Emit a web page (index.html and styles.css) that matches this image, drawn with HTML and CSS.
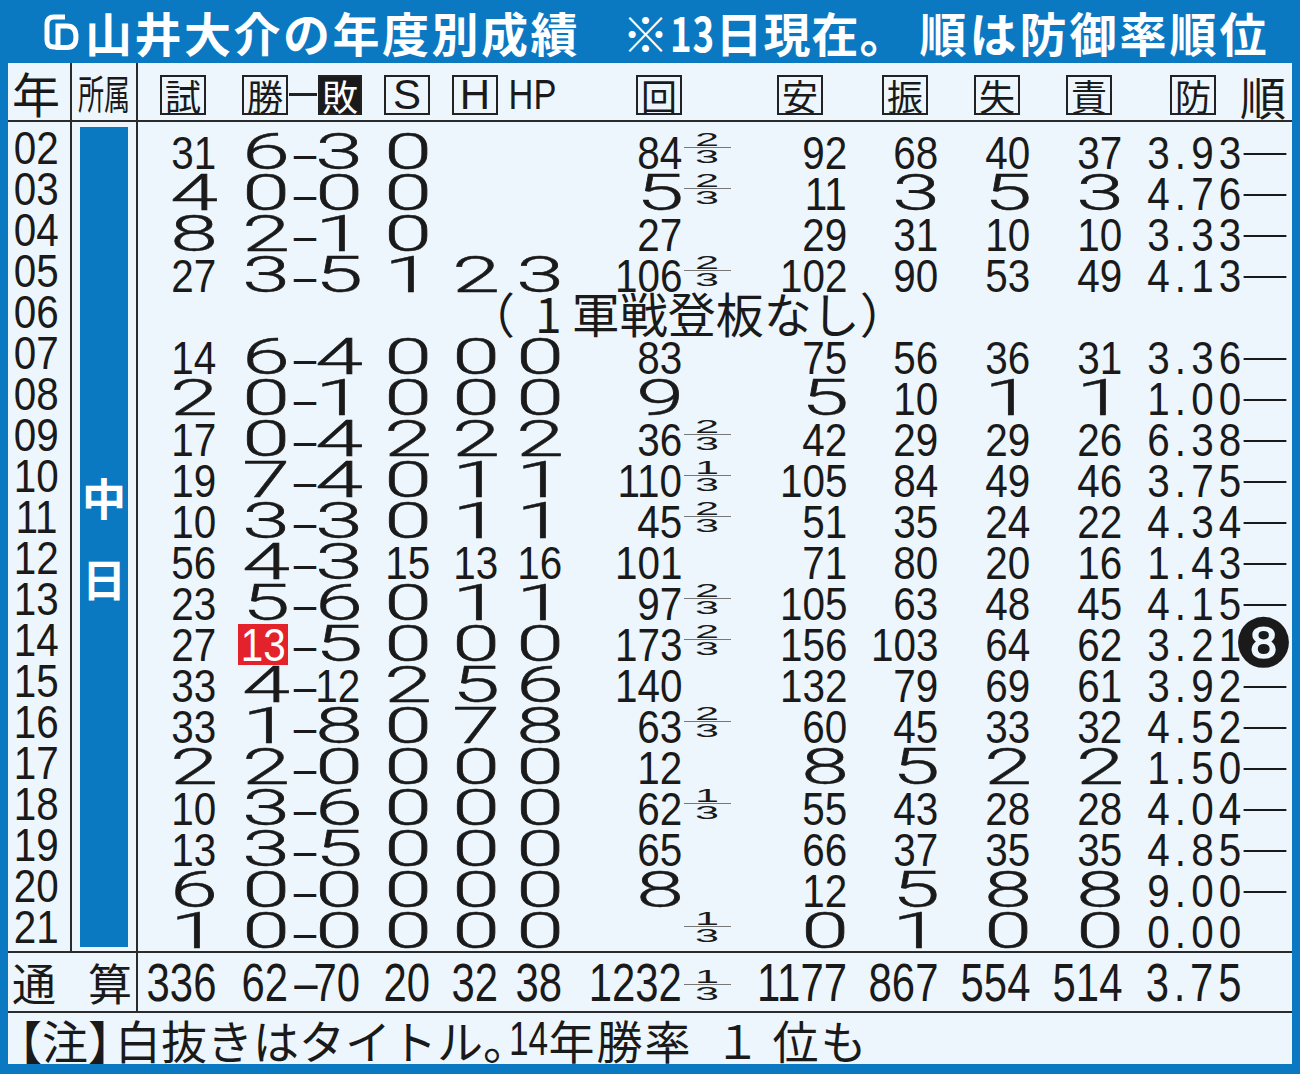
FILE: index.html
```html
<!DOCTYPE html>
<html lang="ja">
<head>
<meta charset="utf-8">
<title>山井大介の年度別成績</title>
<link rel="stylesheet" href="styles.css">
</head>
<body>
<div class="page">
  <div class="title">
    <svg class="logo" viewBox="0 0 38 42"><path d="M23 6H12Q5 6 5 13V29Q5 36 12 36H14" fill="none" stroke="#fff" stroke-width="5"/><path d="M16 13V38M13.5 15H25Q34 15 34 26Q34 36.5 25 36.5H13.5" fill="none" stroke="#fff" stroke-width="5"/></svg>
    <span class="t-name">山井大介の年度別成績</span>
    <span class="t-date">※<span class="d13">13</span>日現在。</span>
    <span class="t-rank">順は防御率順位</span>
  </div>
  <div class="panel">
    <div class="head">
      <div class="c-year">年</div>
      <div class="c-team"><span class="shozoku">所属</span></div>
      <div class="cols">
        <div class="mr10"><span class="box">試</span></div>
        <div><span class="box">勝</span></div>
        <div><span class="hdash"></span></div>
        <div class="mr-2"><span class="box inv">敗</span></div>
        <div><span class="box lat">S</span></div>
        <div><span class="box lat">H</span></div>
        <div class="mr6"><span class="hp">HP</span></div>
        <div><span class="box">回</span></div>
        <div></div>
        <div class="mr24"><span class="box">安</span></div>
        <div class="mr10"><span class="box">振</span></div>
        <div class="mr10"><span class="box">失</span></div>
        <div class="mr10"><span class="box">責</span></div>
        <div class="mr24"><span class="box">防</span></div>
        <div><span class="jun">順</span></div>
      </div>
    </div>
    <div class="body">
      <div class="c-year">
        <div class="yr"><span class="n">02</span></div>
        <div class="yr"><span class="n">03</span></div>
        <div class="yr"><span class="n">04</span></div>
        <div class="yr"><span class="n">05</span></div>
        <div class="yr"><span class="n">06</span></div>
        <div class="yr"><span class="n">07</span></div>
        <div class="yr"><span class="n">08</span></div>
        <div class="yr"><span class="n">09</span></div>
        <div class="yr"><span class="n">10</span></div>
        <div class="yr"><span class="n">11</span></div>
        <div class="yr"><span class="n">12</span></div>
        <div class="yr"><span class="n">13</span></div>
        <div class="yr"><span class="n">14</span></div>
        <div class="yr"><span class="n">15</span></div>
        <div class="yr"><span class="n">16</span></div>
        <div class="yr"><span class="n">17</span></div>
        <div class="yr"><span class="n">18</span></div>
        <div class="yr"><span class="n">19</span></div>
        <div class="yr"><span class="n">20</span></div>
        <div class="yr"><span class="n">21</span></div>
      </div>
      <div class="c-team">
        <div class="team-bar"><span>中</span><span>日</span></div>
      </div>
      <div class="rows">
        <div class="row cols"><div><span class="n">31</span></div><div><span class="w">6</span></div><div><span class="n">–</span></div><div><span class="w">3</span></div><div><span class="w">0</span></div><div></div><div></div><div><span class="n">84</span></div><div><span class="f"><span>2</span><span class="fl"></span><span>3</span></span></div><div><span class="n">92</span></div><div><span class="n">68</span></div><div><span class="n">40</span></div><div><span class="n">37</span></div><div><span class="n era">3.93</span></div><div><span class="rk">―</span></div></div>
        <div class="row cols"><div><span class="w">4</span></div><div><span class="w">0</span></div><div><span class="n">–</span></div><div><span class="w">0</span></div><div><span class="w">0</span></div><div></div><div></div><div><span class="w">5</span></div><div><span class="f"><span>2</span><span class="fl"></span><span>3</span></span></div><div><span class="n">11</span></div><div><span class="w">3</span></div><div><span class="w">5</span></div><div><span class="w">3</span></div><div><span class="n era">4.76</span></div><div><span class="rk">―</span></div></div>
        <div class="row cols"><div><span class="w">8</span></div><div><span class="w">2</span></div><div><span class="n">–</span></div><div><span class="w">1</span></div><div><span class="w">0</span></div><div></div><div></div><div><span class="n">27</span></div><div></div><div><span class="n">29</span></div><div><span class="n">31</span></div><div><span class="n">10</span></div><div><span class="n">10</span></div><div><span class="n era">3.33</span></div><div><span class="rk">―</span></div></div>
        <div class="row cols"><div><span class="n">27</span></div><div><span class="w">3</span></div><div><span class="n">–</span></div><div><span class="w">5</span></div><div><span class="w">1</span></div><div><span class="w">2</span></div><div><span class="w">3</span></div><div><span class="n">106</span></div><div><span class="f"><span>2</span><span class="fl"></span><span>3</span></span></div><div><span class="n">102</span></div><div><span class="n">90</span></div><div><span class="n">53</span></div><div><span class="n">49</span></div><div><span class="n era">4.13</span></div><div><span class="rk">―</span></div></div>
        <div class="row cols"><div class="nogame"><span class="par">（</span><span class="one">1</span>軍戦登板なし）</div></div>
        <div class="row cols"><div><span class="n">14</span></div><div><span class="w">6</span></div><div><span class="n">–</span></div><div><span class="w">4</span></div><div><span class="w">0</span></div><div><span class="w">0</span></div><div><span class="w">0</span></div><div><span class="n">83</span></div><div></div><div><span class="n">75</span></div><div><span class="n">56</span></div><div><span class="n">36</span></div><div><span class="n">31</span></div><div><span class="n era">3.36</span></div><div><span class="rk">―</span></div></div>
        <div class="row cols"><div><span class="w">2</span></div><div><span class="w">0</span></div><div><span class="n">–</span></div><div><span class="w">1</span></div><div><span class="w">0</span></div><div><span class="w">0</span></div><div><span class="w">0</span></div><div><span class="w">9</span></div><div></div><div><span class="w">5</span></div><div><span class="n">10</span></div><div><span class="w">1</span></div><div><span class="w">1</span></div><div><span class="n era">1.00</span></div><div><span class="rk">―</span></div></div>
        <div class="row cols"><div><span class="n">17</span></div><div><span class="w">0</span></div><div><span class="n">–</span></div><div><span class="w">4</span></div><div><span class="w">2</span></div><div><span class="w">2</span></div><div><span class="w">2</span></div><div><span class="n">36</span></div><div><span class="f"><span>2</span><span class="fl"></span><span>3</span></span></div><div><span class="n">42</span></div><div><span class="n">29</span></div><div><span class="n">29</span></div><div><span class="n">26</span></div><div><span class="n era">6.38</span></div><div><span class="rk">―</span></div></div>
        <div class="row cols"><div><span class="n">19</span></div><div><span class="w">7</span></div><div><span class="n">–</span></div><div><span class="w">4</span></div><div><span class="w">0</span></div><div><span class="w">1</span></div><div><span class="w">1</span></div><div><span class="n">110</span></div><div><span class="f"><span>1</span><span class="fl"></span><span>3</span></span></div><div><span class="n">105</span></div><div><span class="n">84</span></div><div><span class="n">49</span></div><div><span class="n">46</span></div><div><span class="n era">3.75</span></div><div><span class="rk">―</span></div></div>
        <div class="row cols"><div><span class="n">10</span></div><div><span class="w">3</span></div><div><span class="n">–</span></div><div><span class="w">3</span></div><div><span class="w">0</span></div><div><span class="w">1</span></div><div><span class="w">1</span></div><div><span class="n">45</span></div><div><span class="f"><span>2</span><span class="fl"></span><span>3</span></span></div><div><span class="n">51</span></div><div><span class="n">35</span></div><div><span class="n">24</span></div><div><span class="n">22</span></div><div><span class="n era">4.34</span></div><div><span class="rk">―</span></div></div>
        <div class="row cols"><div><span class="n">56</span></div><div><span class="w">4</span></div><div><span class="n">–</span></div><div><span class="w">3</span></div><div><span class="n">15</span></div><div><span class="n">13</span></div><div><span class="n">16</span></div><div><span class="n">101</span></div><div></div><div><span class="n">71</span></div><div><span class="n">80</span></div><div><span class="n">20</span></div><div><span class="n">16</span></div><div><span class="n era">1.43</span></div><div><span class="rk">―</span></div></div>
        <div class="row cols"><div><span class="n">23</span></div><div><span class="w">5</span></div><div><span class="n">–</span></div><div><span class="w">6</span></div><div><span class="w">0</span></div><div><span class="w">1</span></div><div><span class="w">1</span></div><div><span class="n">97</span></div><div><span class="f"><span>2</span><span class="fl"></span><span>3</span></span></div><div><span class="n">105</span></div><div><span class="n">63</span></div><div><span class="n">48</span></div><div><span class="n">45</span></div><div><span class="n era">4.15</span></div><div><span class="rk">―</span></div></div>
        <div class="row cols"><div><span class="n">27</span></div><div><span class="win"><span class="n">13</span></span></div><div><span class="n">–</span></div><div><span class="w">5</span></div><div><span class="w">0</span></div><div><span class="w">0</span></div><div><span class="w">0</span></div><div><span class="n">173</span></div><div><span class="f"><span>2</span><span class="fl"></span><span>3</span></span></div><div><span class="n">156</span></div><div><span class="n">103</span></div><div><span class="n">64</span></div><div><span class="n">62</span></div><div><span class="n era">3.21</span></div><div><span class="rk8">❽</span></div></div>
        <div class="row cols"><div><span class="n">33</span></div><div><span class="w">4</span></div><div><span class="n">–</span></div><div><span class="n">12</span></div><div><span class="w">2</span></div><div><span class="w">5</span></div><div><span class="w">6</span></div><div><span class="n">140</span></div><div></div><div><span class="n">132</span></div><div><span class="n">79</span></div><div><span class="n">69</span></div><div><span class="n">61</span></div><div><span class="n era">3.92</span></div><div><span class="rk">―</span></div></div>
        <div class="row cols"><div><span class="n">33</span></div><div><span class="w">1</span></div><div><span class="n">–</span></div><div><span class="w">8</span></div><div><span class="w">0</span></div><div><span class="w">7</span></div><div><span class="w">8</span></div><div><span class="n">63</span></div><div><span class="f"><span>2</span><span class="fl"></span><span>3</span></span></div><div><span class="n">60</span></div><div><span class="n">45</span></div><div><span class="n">33</span></div><div><span class="n">32</span></div><div><span class="n era">4.52</span></div><div><span class="rk">―</span></div></div>
        <div class="row cols"><div><span class="w">2</span></div><div><span class="w">2</span></div><div><span class="n">–</span></div><div><span class="w">0</span></div><div><span class="w">0</span></div><div><span class="w">0</span></div><div><span class="w">0</span></div><div><span class="n">12</span></div><div></div><div><span class="w">8</span></div><div><span class="w">5</span></div><div><span class="w">2</span></div><div><span class="w">2</span></div><div><span class="n era">1.50</span></div><div><span class="rk">―</span></div></div>
        <div class="row cols"><div><span class="n">10</span></div><div><span class="w">3</span></div><div><span class="n">–</span></div><div><span class="w">6</span></div><div><span class="w">0</span></div><div><span class="w">0</span></div><div><span class="w">0</span></div><div><span class="n">62</span></div><div><span class="f"><span>1</span><span class="fl"></span><span>3</span></span></div><div><span class="n">55</span></div><div><span class="n">43</span></div><div><span class="n">28</span></div><div><span class="n">28</span></div><div><span class="n era">4.04</span></div><div><span class="rk">―</span></div></div>
        <div class="row cols"><div><span class="n">13</span></div><div><span class="w">3</span></div><div><span class="n">–</span></div><div><span class="w">5</span></div><div><span class="w">0</span></div><div><span class="w">0</span></div><div><span class="w">0</span></div><div><span class="n">65</span></div><div></div><div><span class="n">66</span></div><div><span class="n">37</span></div><div><span class="n">35</span></div><div><span class="n">35</span></div><div><span class="n era">4.85</span></div><div><span class="rk">―</span></div></div>
        <div class="row cols"><div><span class="w">6</span></div><div><span class="w">0</span></div><div><span class="n">–</span></div><div><span class="w">0</span></div><div><span class="w">0</span></div><div><span class="w">0</span></div><div><span class="w">0</span></div><div><span class="w">8</span></div><div></div><div><span class="n">12</span></div><div><span class="w">5</span></div><div><span class="w">8</span></div><div><span class="w">8</span></div><div><span class="n era">9.00</span></div><div><span class="rk">―</span></div></div>
        <div class="row cols"><div><span class="w">1</span></div><div><span class="w">0</span></div><div><span class="n">–</span></div><div><span class="w">0</span></div><div><span class="w">0</span></div><div><span class="w">0</span></div><div><span class="w">0</span></div><div></div><div><span class="f"><span>1</span><span class="fl"></span><span>3</span></span></div><div><span class="w">0</span></div><div><span class="w">1</span></div><div><span class="w">0</span></div><div><span class="w">0</span></div><div><span class="n era">0.00</span></div><div></div></div>
      </div>
    </div>
    <div class="total">
      <div class="tlabel"><span>通</span><span>算</span></div>
      <div class="cols"><div><span class="n">336</span></div><div><span class="n">62</span></div><div><span class="n">–</span></div><div><span class="n">70</span></div><div><span class="n">20</span></div><div><span class="n">32</span></div><div><span class="n">38</span></div><div><span class="n">1232</span></div><div><span class="f"><span>1</span><span class="fl"></span><span>3</span></span></div><div><span class="n">1177</span></div><div><span class="n">867</span></div><div><span class="n">554</span></div><div><span class="n">514</span></div><div><span class="n era">3.75</span></div><div></div></div>
    </div>
    <div class="note"><span class="lb">【</span>注<span class="rb">】</span>白抜きはタイトル<span class="pd">。</span><span class="n14">14</span><span class="tail">年勝率<span class="one-n">１</span>位も</span></div>
  </div>
</div>
</body>
</html>
```

FILE: styles.css
```css
*{box-sizing:border-box;margin:0;padding:0}
html,body{width:1300px;height:1074px;overflow:hidden}
body{background:#0b78c2;color:#1a1a1a;font-family:"Noto Sans CJK JP","Noto Sans CJK SC",sans-serif}
.page{height:1074px;display:flex;flex-direction:column}

.title{height:63px;flex:none;display:flex;align-items:center;padding-left:42px;color:#fff;font-weight:700;font-size:47px;line-height:63px;white-space:nowrap}
.logo{width:38px;height:42px;margin-right:5px;flex:none}
.t-name{letter-spacing:2.5px}
.t-date{margin-left:42px;letter-spacing:1px}
.d13{display:inline-block;transform:scaleX(.78);transform-origin:0 50%;margin-right:-12px}
.t-rank{margin-left:12px;letter-spacing:3px}

.panel{flex:none;height:1001px;margin:0 8px;background:#edf6fc;display:flex;flex-direction:column}

.head{height:59px;flex:none;display:flex;border-bottom:2px solid #2b2b2b}
.c-year{width:64px;flex:none;border-right:2px solid #2b2b2b}
.c-team{width:66px;flex:none;border-right:2px solid #2b2b2b}
.head .c-year{display:flex;align-items:center;justify-content:center;padding-right:6px;font-size:48px;line-height:1}
.head .c-team{display:flex;align-items:center;justify-content:center;white-space:nowrap;overflow:visible}
.shozoku{display:inline-block;flex:none;font-size:40px;line-height:1;white-space:nowrap;transform:scaleX(.65)}

.cols{display:grid;grid-template-columns:78px 72px 30px 42px 70px 68px 64px 120px 50px 115px 91px 92px 92px 118px 52px;width:1154px}
.cols>div{display:flex;align-items:center;justify-content:flex-end;white-space:nowrap}
.cols>div:nth-child(3),.cols>div:nth-child(9){justify-content:center}
.cols>div:nth-child(15){justify-content:flex-start}

.head .cols>div{align-items:flex-end;padding-bottom:5px}
.mr10{margin-right:10px}
.mr24{margin-right:24px}
.mr6{margin-right:6px}
.mr-2{margin-right:-2px}
.box{width:46px;height:40px;border:2px solid #222;display:flex;align-items:center;justify-content:center;font-size:36px;line-height:1}
.box.lat{font-family:"Liberation Sans",sans-serif;font-size:42px}
.box.inv{background:#1a1a1a;color:#fff}
.hdash{display:block;width:28px;height:3px;background:#222;margin-bottom:19px}
.hp{display:inline-block;font-family:"Liberation Sans",sans-serif;font-size:42px;line-height:40px;transform:scaleX(.82);transform-origin:100% 50%}
.jun{display:block;font-size:46px;line-height:40px}

.body{height:831px;flex:none;display:flex;border-bottom:2px solid #2b2b2b}
.body .c-year{padding:5px 0 4px}
.yr{height:41px;display:flex;align-items:center;justify-content:center;padding-right:5px}
.body .c-team{padding:5px 0 4px 8px}
.team-bar{width:48px;height:820px;background:#0b78c2;color:#fff;font-weight:700;font-size:44px;line-height:44px;display:flex;flex-direction:column;align-items:center;justify-content:center;gap:37px}
.rows{padding-top:5px}
.row{height:41px}

.n{display:inline-block;font-family:"Liberation Sans",sans-serif;font-size:47px;line-height:1;transform:scaleX(.86);transform-origin:100% 50%}
.yr .n{transform-origin:50% 50%}
.w{display:inline-block;width:44px;text-align:center;font-family:Roboto,"Liberation Sans",sans-serif;font-weight:300;font-size:50px;line-height:1;-webkit-text-stroke:.5px currentColor;transform:scaleX(1.72)}
.era{letter-spacing:6px;margin-right:-6px}

.f{display:flex;flex-direction:column;align-items:center;align-self:flex-start;padding-top:6px}
.f>span{display:block;font-family:"Liberation Sans",sans-serif;font-size:18px;line-height:14px;height:14px;transform:scaleX(2.4)}
.f>.fl{width:47px;height:0;border-top:1.5px solid #777;margin-bottom:2px;transform:none}

.nogame{grid-column:1/-1;justify-content:flex-start !important;padding-left:329px;font-size:48px;line-height:1;margin-top:-3px}
.one{margin:0 10px 0 20px}
.win{width:50px;height:41px;background:#e3222b;color:#fff;display:flex;align-items:center;justify-content:center}
.win .n{transform-origin:50% 50%}
.rk{display:block;font-size:50px;line-height:1;margin-top:-3px}
.rk8{display:block;font-family:"DejaVu Sans",sans-serif;font-size:68px;line-height:41px;height:41px;margin-left:-7px;margin-top:-2px}

.total{height:60px;flex:none;display:flex;border-bottom:2px solid #2b2b2b}
.tlabel{width:130px;flex:none;border-right:2px solid #2b2b2b;display:flex;justify-content:space-between;align-items:center;padding:0 4px;font-size:44px;line-height:1}
.total .n{font-size:53px;transform:scaleX(.79)}
.total .f{padding-top:17px}

.note{flex:1;display:flex;align-items:center;font-size:46px;line-height:1;white-space:nowrap}
.lb{margin-left:-12px}
.rb{margin-right:-19px}
.pd{margin-right:-20px}
.n14{display:inline-block;font-family:"Liberation Sans",sans-serif;font-size:49px;transform:scaleX(.72);transform-origin:0 50%;margin-right:-15px}
.tail{letter-spacing:2px}
.one-n{margin:0 10px 0 22px}
```
